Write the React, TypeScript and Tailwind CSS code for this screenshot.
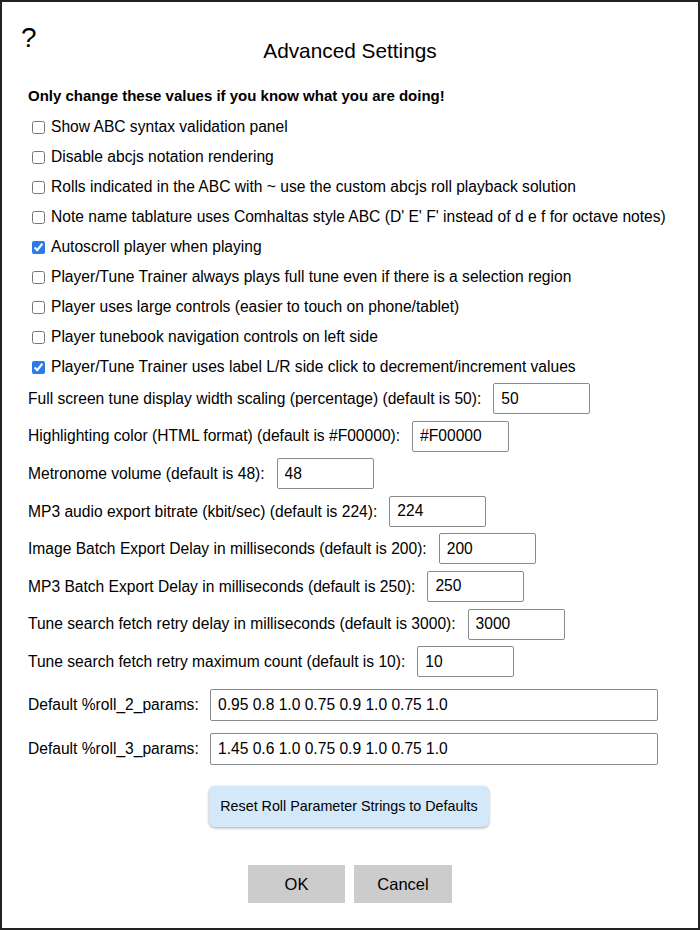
import React from 'react';

const font = { fontFamily: '"Liberation Sans", Arial, Helvetica, sans-serif' };

const checks: { label: string; checked: boolean }[] = [
  { label: 'Show ABC syntax validation panel', checked: false },
  { label: 'Disable abcjs notation rendering', checked: false },
  { label: 'Rolls indicated in the ABC with ~ use the custom abcjs roll playback solution', checked: false },
  { label: "Note name tablature uses Comhaltas style ABC (D' E' F' instead of d e f for octave notes)", checked: false },
  { label: 'Autoscroll player when playing', checked: true },
  { label: 'Player/Tune Trainer always plays full tune even if there is a selection region', checked: false },
  { label: 'Player uses large controls (easier to touch on phone/tablet)', checked: false },
  { label: 'Player tunebook navigation controls on left side', checked: false },
  { label: 'Player/Tune Trainer uses label L/R side click to decrement/increment values', checked: true },
];

const fields: { label: string; value: string }[] = [
  { label: 'Full screen tune display width scaling (percentage) (default is 50):', value: '50' },
  { label: 'Highlighting color (HTML format) (default is #F00000):', value: '#F00000' },
  { label: 'Metronome volume (default is 48):', value: '48' },
  { label: 'MP3 audio export bitrate (kbit/sec) (default is 224):', value: '224' },
  { label: 'Image Batch Export Delay in milliseconds (default is 200):', value: '200' },
  { label: 'MP3 Batch Export Delay in milliseconds (default is 250):', value: '250' },
  { label: 'Tune search fetch retry delay in milliseconds (default is 3000):', value: '3000' },
  { label: 'Tune search fetch retry maximum count (default is 10):', value: '10' },
];

const rolls = [
  { label: 'Default %roll_2_params:', value: '0.95 0.8 1.0 0.75 0.9 1.0 0.75 1.0' },
  { label: 'Default %roll_3_params:', value: '1.45 0.6 1.0 0.75 0.9 1.0 0.75 1.0' },
];

export default function App() {
  return (
    <div
      className="relative w-[700px] h-[930px] border-2 border-[#222] bg-white text-black box-border overflow-hidden"
      style={font}
    >
      {/* help glyph */}
      <div className="absolute left-[19px] top-[22px] text-[28px] leading-none">?</div>

      <div className="pt-[37px] text-center text-[20.8px] leading-[24px]">Advanced Settings</div>

      <div className="pl-[26px] pr-4">
        <div className="mt-[18px] h-[31px] flex items-center text-[15px] font-bold">
          Only change these values if you know what you are doing!
        </div>

        {/* checkbox options */}
        <div className="flex flex-col">
          {checks.map((c) => (
            <label key={c.label} className="h-[30px] flex items-center text-[15.6px]">
              <input
                type="checkbox"
                defaultChecked={c.checked}
                className="ml-[4px] mr-[6px] w-[13px] h-[13px] accent-[#2c7be5]"
              />
              {c.label}
            </label>
          ))}
        </div>

        {/* numeric / text fields */}
        <div className="mt-[1px] flex flex-col gap-[6.6px]">
          {fields.map((f) => (
            <div key={f.label} className="h-[31px] flex items-center gap-[12px] text-[15.6px]">
              <span>{f.label}</span>
              <input
                type="text"
                defaultValue={f.value}
                className="w-[97px] h-[31px] px-[7px] border border-[#8a8a8a] rounded-[2px] text-[15.6px] outline-none"
                style={font}
              />
            </div>
          ))}
        </div>

        <div className="mt-[12px] flex flex-col gap-[12px]">
          {rolls.map((r) => (
            <div key={r.label} className="h-[32px] flex items-center text-[15.6px]">
              <span className="w-[182px]">{r.label}</span>
              <input
                type="text"
                defaultValue={r.value}
                className="w-[448px] h-[32px] px-[7px] border border-[#8a8a8a] rounded-[2px] text-[15.6px] outline-none"
                style={font}
              />
            </div>
          ))}
        </div>

        <div className="mt-[21px] pl-[181px]">
          <button className="w-[280px] h-[41px] rounded-[6px] bg-[#d3e8f8] text-[14.3px] shadow-[0_1px_3px_rgba(0,0,0,0.35)]">
            Reset Roll Parameter Strings to Defaults
          </button>
        </div>
      </div>

      <div className="mt-[38px] flex justify-center gap-[9px]">
        <button className="w-[97px] h-[38px] bg-[#cccccc] text-[16.5px]">OK</button>
        <button className="w-[98px] h-[38px] bg-[#cccccc] text-[16.5px]">Cancel</button>
      </div>
    </div>
  );
}
